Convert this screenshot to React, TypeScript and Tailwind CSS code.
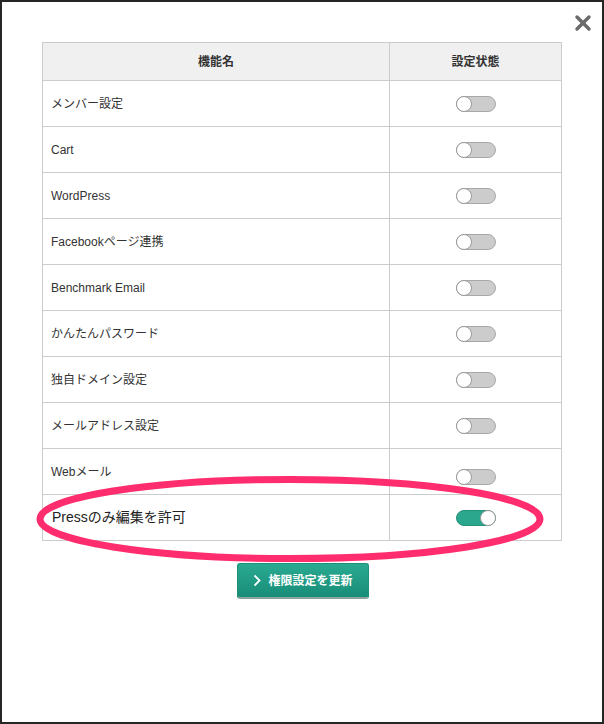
import { X } from 'lucide-react'

const rows = [
  'メンバー設定',
  'Cart',
  'WordPress',
  'Facebookページ連携',
  'Benchmark Email',
  'かんたんパスワード',
  '独自ドメイン設定',
  'メールアドレス設定',
  'Webメール',
]

function Toggle({ on }: { on?: boolean }) {
  return (
    <span
      className={
        on
          ? 'relative inline-block w-[40px] h-[16px] rounded-full bg-[#2ba78d] border border-[#23917a]'
          : 'relative inline-block w-[40px] h-[16px] rounded-full bg-[#cccccc] border border-[#a8a8a8]'
      }
    >
      <span
        className={
          on
            ? 'absolute top-[-1px] right-[-1px] w-[16px] h-[16px] rounded-full bg-white border border-[#9a9a9a]'
            : 'absolute top-[-1px] left-[-1px] w-[16px] h-[16px] rounded-full bg-white border border-[#9a9a9a]'
        }
      />
    </span>
  )
}

export default function App() {
  return (
    <div
      className="w-[604px] h-[724px] bg-[#262626] p-[2px]"
      style={{ fontFamily: '"Liberation Sans", "Noto Sans CJK JP", sans-serif' }}
    >
      <div className="relative w-full h-full bg-white pt-[40px]">
        <button className="absolute top-[9px] right-[7px] text-[#6b6b6b]">
          <X size={24} strokeWidth={3.5} />
        </button>

        <table className="ml-[40px] w-[520px] border-collapse text-[12px] text-[#333]">
          <thead>
            <tr className="h-[38px] bg-[#f0f0f0]">
              <th className="border border-[#cccccc] font-bold w-[347px]">機能名</th>
              <th className="border border-[#cccccc] font-bold">設定状態</th>
            </tr>
          </thead>
          <tbody>
            {rows.map(r => (
              <tr key={r} className="h-[46px]">
                <td className="border border-[#cccccc] pl-[8px]">{r}</td>
                <td className="border border-[#cccccc] text-center align-middle">
                  <div className={r === 'Webメール' ? 'flex justify-center pt-[10px]' : 'flex justify-center'}>
                    <Toggle />
                  </div>
                </td>
              </tr>
            ))}
            <tr className="h-[46px]">
              <td className="border border-[#cccccc] pl-[9px] text-[14px] text-[#222]">Pressのみ編集を許可</td>
              <td className="border border-[#cccccc] text-center">
                <div className="flex justify-center">
                  <Toggle on />
                </div>
              </td>
            </tr>
          </tbody>
        </table>

        <div className="flex justify-center mt-[22px] pl-[2px]">
          <button className="flex items-center gap-[7px] w-[132px] h-[36px] justify-center rounded-[3px] bg-gradient-to-b from-[#2aaa91] to-[#188d78] border border-[#1d8f7b] border-b-2 border-b-[#8fa39e] text-white text-[12px] font-bold">
            <svg width="8" height="13" viewBox="0 0 8 13" fill="none">
              <path d="M1.5 1.5 L6.5 6.5 L1.5 11.5" stroke="white" strokeWidth="1.8" />
            </svg>
            権限設定を更新
          </button>
        </div>

        <svg
          className="absolute left-[33px] top-[472px] pointer-events-none"
          width="512"
          height="92"
          viewBox="0 0 512 92"
        >
          <ellipse cx="255" cy="45" rx="250" ry="39.5" fill="none" stroke="#ff2d6e" strokeWidth="7" />
        </svg>
      </div>
    </div>
  )
}
